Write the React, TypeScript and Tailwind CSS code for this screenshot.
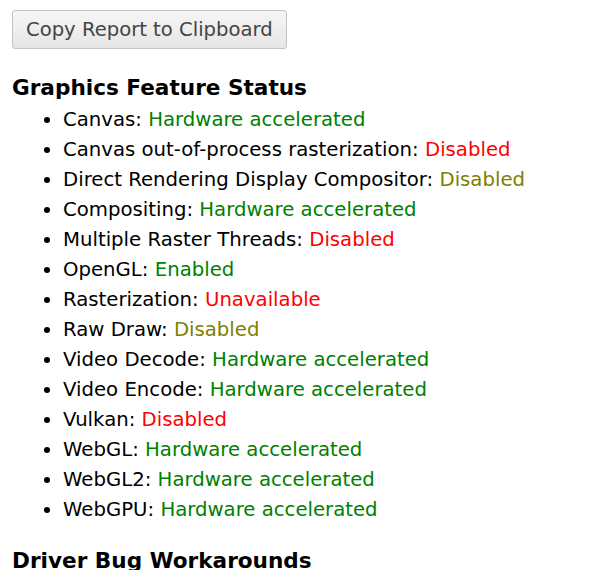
const features: { name: string; status: string; color: string }[] = [
  { name: "Canvas", status: "Hardware accelerated", color: "text-[#008000]" },
  { name: "Canvas out-of-process rasterization", status: "Disabled", color: "text-[#ff0000]" },
  { name: "Direct Rendering Display Compositor", status: "Disabled", color: "text-[#808000]" },
  { name: "Compositing", status: "Hardware accelerated", color: "text-[#008000]" },
  { name: "Multiple Raster Threads", status: "Disabled", color: "text-[#ff0000]" },
  { name: "OpenGL", status: "Enabled", color: "text-[#008000]" },
  { name: "Rasterization", status: "Unavailable", color: "text-[#ff0000]" },
  { name: "Raw Draw", status: "Disabled", color: "text-[#808000]" },
  { name: "Video Decode", status: "Hardware accelerated", color: "text-[#008000]" },
  { name: "Video Encode", status: "Hardware accelerated", color: "text-[#008000]" },
  { name: "Vulkan", status: "Disabled", color: "text-[#ff0000]" },
  { name: "WebGL", status: "Hardware accelerated", color: "text-[#008000]" },
  { name: "WebGL2", status: "Hardware accelerated", color: "text-[#008000]" },
  { name: "WebGPU", status: "Hardware accelerated", color: "text-[#008000]" },
];

export default function App() {
  return (
    <div className="h-[570px] overflow-hidden bg-white px-3 pt-[10px] text-black font-['DejaVu_Sans',sans-serif]">
      <button
        type="button"
        className="h-[39px] rounded-[3px] border border-[#c4c4c4] bg-gradient-to-b from-[#f6f6f6] to-[#e6e6e6] px-[13px] text-[19.6px] text-[#444]"
      >
        Copy Report to Clipboard
      </button>

      <h3 className="mt-[26px] text-[21.6px] font-bold leading-[26px]">Graphics Feature Status</h3>
      <ul className="mt-[4px] list-disc pl-[51px] text-[19.7px] leading-[30px]">
        {features.map((f) => (
          <li key={f.name}>
            {f.name}: <span className={f.color}>{f.status}</span>
          </li>
        ))}
      </ul>

      <h3 className="mt-[23px] text-[21.6px] font-bold leading-[26px]">Driver Bug Workarounds</h3>
    </div>
  );
}
